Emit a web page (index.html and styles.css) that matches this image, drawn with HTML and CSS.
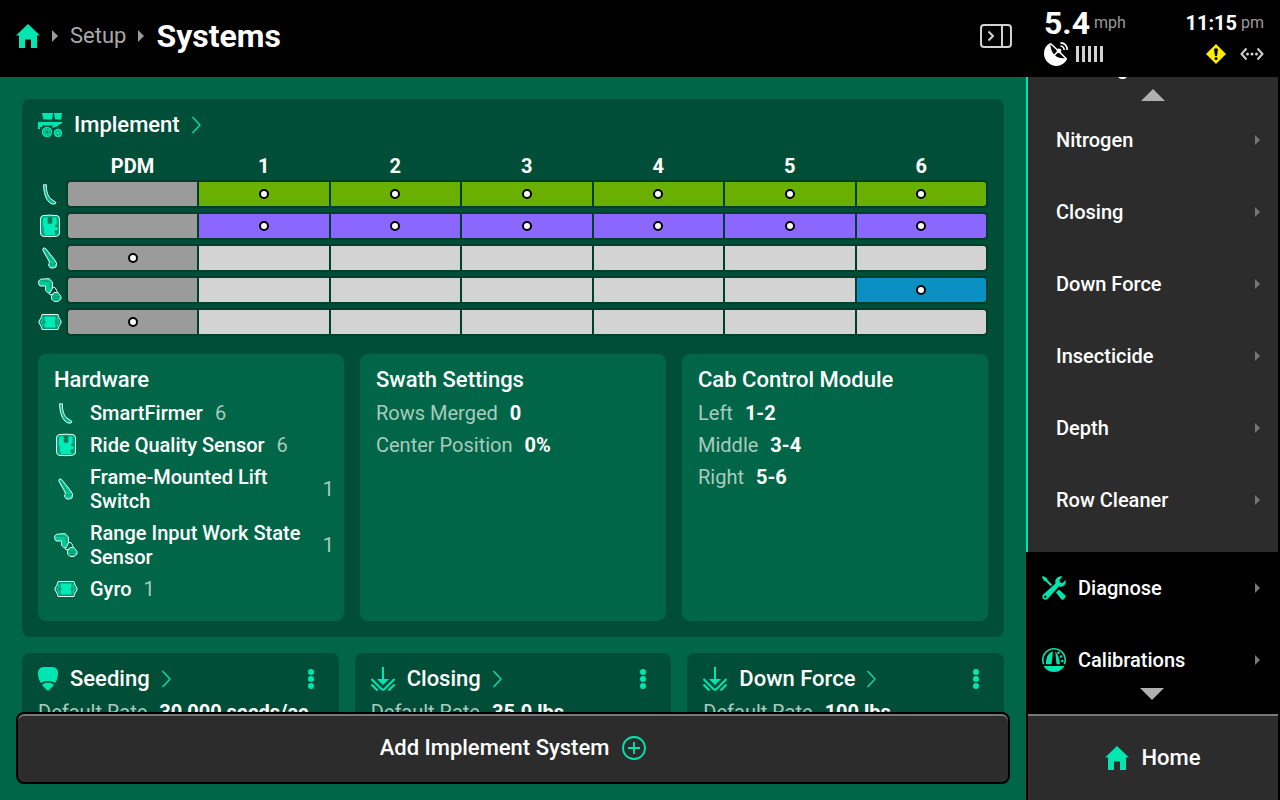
FILE: index.html
```html
<!DOCTYPE html>
<html lang="en">
<head>
<meta charset="utf-8">
<meta name="viewport" content="width=device-width, initial-scale=1">
<title>Systems</title>
<link rel="stylesheet" href="styles.css">
</head>
<body>
<svg class="sprite" aria-hidden="true">
  <symbol id="home" viewBox="0 0 24 24"><path fill="currentColor" d="M12 0 24 11.500H21V24H15V15.500H9V24H3V11.500H0Z"/></symbol>
  <symbol id="caret" viewBox="0 0 6 12"><path fill="currentColor" d="M0 0 6 6 0 12Z"/></symbol>
  <symbol id="chevron" viewBox="0 0 10 18"><path fill="none" stroke="currentColor" stroke-width="1.300" d="M.5 1 8 9 .5 17"/></symbol>
  <symbol id="up" viewBox="0 0 24 12"><path fill="currentColor" d="M12 0 24 12H0Z"/></symbol>
  <symbol id="down" viewBox="0 0 24 12"><path fill="currentColor" d="M0 0H24L12 12Z"/></symbol>
  <symbol id="dots" viewBox="0 0 6 20"><g fill="currentColor"><circle cx="3" cy="3" r="3"/><circle cx="3" cy="10" r="3"/><circle cx="3" cy="17" r="3"/></g></symbol>
  <symbol id="planter" viewBox="0 0 24 24">
    <path fill="currentColor" d="M4 0H15L14 6.500H5.500ZM16 0H24L23 6.500H17ZM0 9H24V10.500L20 12V13L14 15L15 12.500H4V14H2V16H0Z"/>
    <circle cx="9" cy="19" r="5.200" fill="currentColor"/><circle cx="20" cy="20" r="4.200" fill="currentColor"/>
    <g fill="none" stroke="#004e37"><circle cx="9" cy="19" r="3.300" stroke-width=".8" stroke-dasharray="2 1"/><circle cx="9" cy="19" r="1.200" stroke-width=".8"/><circle cx="20" cy="20" r="2.200" stroke-width=".8" stroke-dasharray="2 1"/></g>
  </symbol>
  <symbol id="firmer" viewBox="0 0 24 24"><path fill="#00b98a" stroke="#e6fff7" stroke-linejoin="round" d="M5.500 2.800H8.500C8.200 9 9.500 14 13 17L18 20.500 17 22H14C9.500 20 7 15 6 8Z"/></symbol>
  <symbol id="ride" viewBox="0 0 24 24"><path fill="#00a87d" stroke="#e6fff7" d="M5 1.600Q12 .7 19 1.600Q21.500 2 21.500 5V19Q21.500 21.800 18.500 22.300Q12 23 5 22.300Q2.500 21.800 2.500 19V5Q2.500 2 5 1.600Z"/><path fill="#00ebb5" d="M5.500 3.500H9.500V9Q12 11.500 14.500 9V3.500H18.500V10L17 11V13H19.500V16H17V19H6V14L5 12V7Z"/><path fill="#00ebb5" d="M7 18H17V21.200H7Z"/><path fill="#007a57" d="M10 3H14V8.500Q12 10.500 10 8.500ZM17.500 11.500H20V13H17.500ZM16.500 17H19V18.500H16.500Z"/></symbol>
  <symbol id="lift" viewBox="0 0 24 24"><path fill="#00ca99" stroke="#e6fff7" stroke-linejoin="round" d="M5.500 2Q7 1.500 8 3L16.500 13.500 18.500 17 18 21 15.500 22H12.500L10.500 19.500 11.500 16 5 4.500Q4.500 3 5.500 2Z"/><path fill="none" stroke="#008f69" d="M7 4 13.500 15M11.500 17.500 15 18.500 18 17"/></symbol>
  <symbol id="range" viewBox="0 0 24 24"><g stroke="#d2f8ec" stroke-linejoin="round"><path fill="none" d="M14 9Q18 9 18.500 12L20 16H15L12 17 10.500 14Z"/><path fill="#00cc99" d="M2.500 1.200 11 .6 14.500 4V10L12 15 9.500 14.500 7.500 12.500V8H2L.7 6V3Z"/><path fill="#00b98a" d="M16 14.500H20L23 18.500V21L20 23.500H16L13.500 21V18Z"/></g><path fill="none" stroke="#008f69" d="M2.500 3H10L12.300 5V10M15.500 18 18 19.500 21 18M16 21.500H20"/></symbol>
  <symbol id="gyro" viewBox="0 0 24 24"><path fill="#009b72" stroke="#e6fff7" stroke-linejoin="round" d="M4 4.500H20L21 8 23 11V13L21 16 20 19.500H4L3 16 1 13V11L3 8Z"/><path fill="#00ebb5" d="M6.500 6.500H17.500V9L16.500 12 17.500 15V17.500H6.500V15L7.500 12 6.500 9Z"/><path fill="none" stroke="#00d9a5" d="M4 7 5 10 3 12 5 14 4 17M20 7 19 10 21 12 19 14 20 17"/></symbol>
  <symbol id="seed" viewBox="0 0 20 24"><path fill="currentColor" d="M5 0Q10-.8 15 0Q20 1 20 6Q20 12 17 16Q14 14 10 14T3 16Q0 12 0 6Q0 1 5 0ZM4 17.800Q10 13.400 16 17.800 14.500 20 10 24 5.500 20 4 17.800Z"/></symbol>
  <symbol id="press" viewBox="0 0 24 24"><path fill="currentColor" d="M11 0H13V12H18L12 18 6 12H11Z"/><path fill="none" stroke="currentColor" stroke-width="2" d="M.5 12 10.500 22Q12 23.500 13.500 22L23.500 12M.5 17.500 6.500 23.500M23.500 17.500 17.500 23.500"/></symbol>
  <symbol id="tools" viewBox="0 0 24 24"><path fill="currentColor" d="M1 0 4.500 1.800 5.500 4 10 8.500 8.500 10 4 5.500 1.800 4.500 0 1ZM14 16.500 17 13.500 23.500 19.500Q24.300 20.500 21.500 23.500 20.500 24.300 19.500 23.500ZM20.500.5 17.500 4 18 6.500 20.500 7 23.500 4Q24.500 7.500 22 9.500 19.500 11.500 16.800 10.500L6 22.500Q4 24.700 1.500 23 -.8 21 1.200 18.500L13.500 7.500Q12.500 4 15 1.700 17.500-.5 20.500.5Z"/><circle cx="3.300" cy="20.800" r="1.200" fill="#000"/></symbol>
  <symbol id="gauge" viewBox="0 0 24 24"><circle cx="12" cy="12" r="12" fill="currentColor"/><path d="M0 16.200H2.500A10.400 10.400 0 1 1 21.500 16.200H24V18H0Z"/><path fill="currentColor" d="M4 16.200Q3.500 6 11 3.200L9.500 16.200ZM13.200 3.200Q17.500 8 18 16.200H14.500Z"/><g fill="currentColor"><circle cx="16.500" cy="4.800" r="1.300"/><circle cx="19.200" cy="8.500" r="1.300"/><circle cx="20.300" cy="13" r="1.300"/></g></symbol>
</svg>

<header class="topbar">
  <nav class="crumbs" aria-label="Breadcrumb">
    <a href="#" class="mint" aria-label="Home"><svg class="i24"><use href="#home"/></svg></a>
    <svg class="caret"><use href="#caret"/></svg>
    <a href="#" class="crumb">Setup</a>
    <svg class="caret"><use href="#caret"/></svg>
    <h1 class="title">Systems</h1>
  </nav>
  <button class="panel-toggle" aria-label="Toggle panel"><svg viewBox="0 0 32 24" class="i32" fill="none" stroke="#d2d2d2"><rect x="1" y="1" width="30" height="22" rx="3" stroke-width="2"/><path stroke-width="2" d="M22 1V23M8.500 7.500 13 12 8.500 16.500"/></svg></button>
  <div class="status">
    <div class="reading"><span class="pairing"><strong class="speed">5.4</strong><span class="unit">mph</span></span><span class="pairing"><strong class="clock">11:15</strong><span class="unit">pm</span></span></div>
    <div class="signals">
      <svg class="i24" viewBox="0 0 24 24"><path fill="#fff" d="M6.500.8A12 12 0 0 0 0 11.500 12.500 12.500 0 0 0 12.500 24Q19 24 23 17.500L22 16Q15 17 10.500 13 6 8.500 6.500.8Z"/><path fill="none" stroke="#fff" stroke-width="1.600" d="M6.500 1.500 14.500 9 22.500 17M14.500 9 9.500 14"/><circle cx="15" cy="8.800" r="2.400" fill="#fff"/><path stroke="#fff" stroke-width="1.600" fill="none" d="M16.500 4Q20 4.500 20.200 8M16.500 .9Q23 1.200 23.200 8"/></svg>
      <svg class="bars" viewBox="0 0 28 16"><path stroke="#d2d2d2" stroke-width="3" d="M1.500 0V16M7.500 0V16M13.500 0V16M19.500 0V16M25.500 0V16"/></svg>
      <span class="grow"></span>
      <svg class="i20" viewBox="0 0 20 20"><path fill="#ffed00" d="M10 0 20 10 10 20 0 10Z"/><path d="M8 5Q10 3.500 12 5L11 12H9Z"/><circle cx="10" cy="14.500" r="1.500"/></svg>
      <svg class="i24" viewBox="0 0 24 24"><path fill="none" stroke="#d2d2d2" stroke-width="2" d="M6.500 6.500 1.500 12 6.500 17.500M17.500 6.500 22.500 12 17.500 17.500"/><g fill="#d2d2d2"><circle cx="7.500" cy="12" r="1.500"/><circle cx="12" cy="12" r="1.500"/><circle cx="16.500" cy="12" r="1.500"/></g></svg>
    </div>
  </div>
</header>

<main class="main">
  <section class="card">
    <h2 class="card-head"><svg class="i24 mint"><use href="#planter"/></svg><a href="#">Implement</a><svg class="chev"><use href="#chevron"/></svg></h2>
    <table class="rows">
      <colgroup><col class="col-icon"><col class="col-pdm"><col><col><col><col><col><col></colgroup>
      <thead><tr><td></td><th scope="col">PDM</th><th scope="col">1</th><th scope="col">2</th><th scope="col">3</th><th scope="col">4</th><th scope="col">5</th><th scope="col">6</th></tr></thead>
      <tbody>
        <tr class="green"><th scope="row" aria-label="SmartFirmer"><svg class="i24"><use href="#firmer"/></svg></th><td></td><td class="on"><i></i></td><td class="on"><i></i></td><td class="on"><i></i></td><td class="on"><i></i></td><td class="on"><i></i></td><td class="on"><i></i></td></tr>
        <tr class="purple"><th scope="row" aria-label="Ride Quality Sensor"><svg class="i24"><use href="#ride"/></svg></th><td></td><td class="on"><i></i></td><td class="on"><i></i></td><td class="on"><i></i></td><td class="on"><i></i></td><td class="on"><i></i></td><td class="on"><i></i></td></tr>
        <tr><th scope="row" aria-label="Frame-Mounted Lift Switch"><svg class="i24"><use href="#lift"/></svg></th><td><i></i></td><td></td><td></td><td></td><td></td><td></td><td></td></tr>
        <tr class="blue"><th scope="row" aria-label="Range Input Work State Sensor"><svg class="i24"><use href="#range"/></svg></th><td></td><td></td><td></td><td></td><td></td><td></td><td class="on"><i></i></td></tr>
        <tr><th scope="row" aria-label="Gyro"><svg class="i24"><use href="#gyro"/></svg></th><td><i></i></td><td></td><td></td><td></td><td></td><td></td><td></td></tr>
      </tbody>
    </table>
    <div class="thirds">
      <section class="panel">
        <h3>Hardware</h3>
        <ul class="hardware">
          <li><svg class="i24"><use href="#firmer"/></svg><span>SmartFirmer</span><span class="muted">6</span></li>
          <li><svg class="i24"><use href="#ride"/></svg><span>Ride Quality Sensor</span><span class="muted">6</span></li>
          <li><svg class="i24"><use href="#lift"/></svg><span>Frame-Mounted Lift Switch</span><span class="muted">1</span></li>
          <li><svg class="i24"><use href="#range"/></svg><span>Range Input Work State Sensor</span><span class="muted">1</span></li>
          <li><svg class="i24"><use href="#gyro"/></svg><span>Gyro</span><span class="muted">1</span></li>
        </ul>
      </section>
      <section class="panel">
        <h3>Swath Settings</h3>
        <dl><div class="pair"><dt>Rows Merged</dt><dd>0</dd></div><div class="pair"><dt>Center Position</dt><dd>0%</dd></div></dl>
      </section>
      <section class="panel">
        <h3>Cab Control Module</h3>
        <dl><div class="pair"><dt>Left</dt><dd>1-2</dd></div><div class="pair"><dt>Middle</dt><dd>3-4</dd></div><div class="pair"><dt>Right</dt><dd>5-6</dd></div></dl>
      </section>
    </div>
  </section>

  <div class="thirds">
    <section class="card">
      <h2 class="card-head"><svg class="seed mint"><use href="#seed"/></svg><a href="#">Seeding</a><svg class="chev"><use href="#chevron"/></svg><button class="more" aria-label="Seeding options"><svg class="dots"><use href="#dots"/></svg></button></h2>
      <dl class="rate"><div class="pair"><dt>Default Rate</dt><dd>30,000 seeds/ac</dd></div></dl>
    </section>
    <section class="card">
      <h2 class="card-head"><svg class="i24 mint"><use href="#press"/></svg><a href="#">Closing</a><svg class="chev"><use href="#chevron"/></svg><button class="more" aria-label="Closing options"><svg class="dots"><use href="#dots"/></svg></button></h2>
      <dl class="rate"><div class="pair"><dt>Default Rate</dt><dd>35.0 lbs</dd></div></dl>
    </section>
    <section class="card">
      <h2 class="card-head"><svg class="i24 mint"><use href="#press"/></svg><a href="#">Down Force</a><svg class="chev"><use href="#chevron"/></svg><button class="more" aria-label="Down Force options"><svg class="dots"><use href="#dots"/></svg></button></h2>
      <dl class="rate"><div class="pair"><dt>Default Rate</dt><dd>100 lbs</dd></div></dl>
    </section>
  </div>

  <button class="add">Add Implement System<svg class="i24 mint" viewBox="0 0 24 24" fill="none" stroke="currentColor"><circle cx="12" cy="12" r="11" stroke-width="1.800"/><path stroke-width="1.800" d="M12 6V18M6 12H18"/></svg></button>
</main>

<nav class="side" aria-label="Menu">
  <div class="group">
    <a href="#" class="item">Seeding<svg class="caret"><use href="#caret"/></svg></a>
    <a href="#" class="item">Nitrogen<svg class="caret"><use href="#caret"/></svg></a>
    <a href="#" class="item">Closing<svg class="caret"><use href="#caret"/></svg></a>
    <a href="#" class="item">Down Force<svg class="caret"><use href="#caret"/></svg></a>
    <a href="#" class="item">Insecticide<svg class="caret"><use href="#caret"/></svg></a>
    <a href="#" class="item">Depth<svg class="caret"><use href="#caret"/></svg></a>
    <a href="#" class="item">Row Cleaner<svg class="caret"><use href="#caret"/></svg></a>
    <svg class="scroll-up"><use href="#up"/></svg>
  </div>
  <div class="tail">
    <a href="#" class="item top"><svg class="i24 mint"><use href="#tools"/></svg>Diagnose<svg class="caret"><use href="#caret"/></svg></a>
    <a href="#" class="item top"><svg class="i24 mint"><use href="#gauge"/></svg>Calibrations<svg class="caret"><use href="#caret"/></svg></a>
    <svg class="scroll-down"><use href="#down"/></svg>
  </div>
  <a href="#" class="home"><svg class="i24 mint"><use href="#home"/></svg>Home</a>
</nav>
</body>
</html>
```
FILE: styles.css
```css
:root {
  --mint: #00e6b0;
  --field: #006647;
  --card: #004e37;
  --edge: #003f2c;
  --dark: #2c2c2c;
}
* { box-sizing: border-box; }
body {
  margin: 0;
  height: 100vh;
  display: grid;
  grid-template: 77px minmax(0, 1fr) / minmax(0, 1fr) 254px;
  overflow: hidden;
  background: #000;
  color: #fff;
  font: 500 20px/24px Roboto, "Liberation Sans", sans-serif;
}
h1, h2, h3, ul, dl, dd { margin: 0; padding: 0; }
a { color: inherit; text-decoration: none; }
button { padding: 0; border: 0; background: none; color: inherit; font: inherit; cursor: pointer; }
svg { display: block; flex: none; }
.sprite { position: absolute; width: 0; height: 0; }
.i20 { width: 20px; height: 20px; }
.i24 { width: 24px; height: 24px; }
.i32 { width: 32px; height: 24px; }
.mint { color: var(--mint); }

.topbar { grid-column: 1 / -1; display: flex; align-items: stretch; }
.crumbs { flex: 1; display: flex; align-items: center; gap: 12px; padding: 0 16px 5px; }
.crumbs .caret { color: #9a9a9a; }
.crumb { color: #aaa; font-size: 22px; font-weight: 400; }
.title { font-size: 32px; line-height: 38px; font-weight: 700; }
.caret { width: 6px; height: 12px; color: #777; }
.panel-toggle { align-self: center; margin: 0 14px 5px 0; }
.status { width: 254px; padding: 8px 16px 0 18px; }
.reading { display: flex; justify-content: space-between; align-items: center; height: 30px; line-height: 30px; }
.pairing { display: flex; align-items: center; gap: 4px; }
.speed { font-size: 32px; font-weight: 700; }
.clock { font-size: 20px; font-weight: 700; }
.unit { color: #999; font-size: 16px; font-weight: 400; }
.signals { display: flex; align-items: center; gap: 8px; padding-top: 4px; height: 28px; }
.signals .i20 { margin-right: 6px; }
.bars { width: 28px; height: 16px; }
.grow { flex: 1; }

.main {
  position: relative;
  display: flex;
  flex-direction: column;
  gap: 16px;
  padding: 22px;
  overflow: hidden;
  background: var(--field);
}
.card { flex: none; padding: 12px 16px 16px; border-radius: 8px; background: var(--card); }
.card-head { display: flex; align-items: center; gap: 12px; font-size: 22px; line-height: 27px; font-weight: 500; }
.chev { width: 10px; height: 18px; color: var(--mint); }
.seed { width: 20px; height: 24px; }
.dots { width: 6px; height: 20px; }
.more { display: grid; place-items: center; width: 24px; height: 24px; margin-left: auto; color: var(--mint); }
.thirds { flex: none; display: grid; grid-template-columns: repeat(3, minmax(0, 1fr)); gap: 16px; }

.rows { width: 100%; margin: 14px 0; table-layout: fixed; border-collapse: separate; border-spacing: 0 4px; }
.rows td, .rows th { padding: 0; }
.col-icon { width: 28px; }
.col-pdm { width: 133px; }
.rows thead th { height: 20px; padding-right: 2px; line-height: 20px; font-weight: 700; }
.rows thead th:nth-child(2) { padding-right: 0; }
.rows tbody td { height: 28px; border: 2px solid var(--edge); border-left: 0; background: #d3d3d3; background-clip: padding-box; }
.rows tbody td:nth-child(2) { border-left: 2px solid var(--edge); border-radius: 4px 0 0 4px; background-color: #9b9b9b; }
.rows tbody td:last-child { border-radius: 0 4px 4px 0; }
.rows .green .on { background-color: #69b000; }
.rows .purple .on { background-color: #8b66ff; }
.rows .blue .on { background-color: #0b90c4; }
.rows i { display: block; width: 10px; height: 10px; margin: 0 auto; border: 2px solid #000; border-radius: 50%; background: #fff; }

.panel { padding: 12px 10px 16px 16px; border-radius: 8px; background: var(--field); }
.panel h3 { margin-bottom: 4px; font-size: 22px; line-height: 27px; font-weight: 500; }
.hardware { list-style: none; }
.hardware li { display: flex; align-items: center; gap: 12px; padding: 4px 0; }
.muted, dt { color: #a9cbbf; font-weight: 400; }
.pair { display: flex; gap: 12px; padding: 4px 0; white-space: nowrap; }
dd { font-weight: 700; }
.rate { padding-top: 4px; }

.add {
  position: absolute;
  left: 16px;
  right: 16px;
  bottom: 16px;
  height: 72px;
  display: flex;
  align-items: center;
  justify-content: center;
  gap: 13px;
  border: 2px solid #000;
  border-radius: 8px;
  background: var(--dark);
  box-shadow: inset 0 2px #777;
  font-size: 22px;
}

.side { display: flex; flex-direction: column; min-height: 0; padding-right: 2px; }
.group {
  position: relative;
  flex: 1;
  min-height: 0;
  display: flex;
  flex-direction: column;
  justify-content: flex-end;
  overflow: hidden;
  padding-bottom: 16px;
  border-left: 2px solid var(--mint);
  background: var(--dark);
}
.item { flex: none; display: flex; align-items: center; height: 72px; padding: 0 18px 0 28px; }
.item .caret { width: 5px; height: 10px; margin-left: auto; }
.item.top { gap: 12px; padding-left: 16px; }
.tail { position: relative; padding-bottom: 18px; }
.scroll-up, .scroll-down { position: absolute; left: 0; right: 0; width: 24px; height: 12px; margin: 0 auto; color: #b0b0b0; }
.scroll-up { top: 12px; }
.scroll-down { bottom: 14px; }
.home {
  display: flex;
  align-items: center;
  justify-content: center;
  gap: 12px;
  height: 86px;
  margin-left: 2px;
  border-top: 2px solid #777;
  background: var(--dark);
  font-size: 22px;
}
```
